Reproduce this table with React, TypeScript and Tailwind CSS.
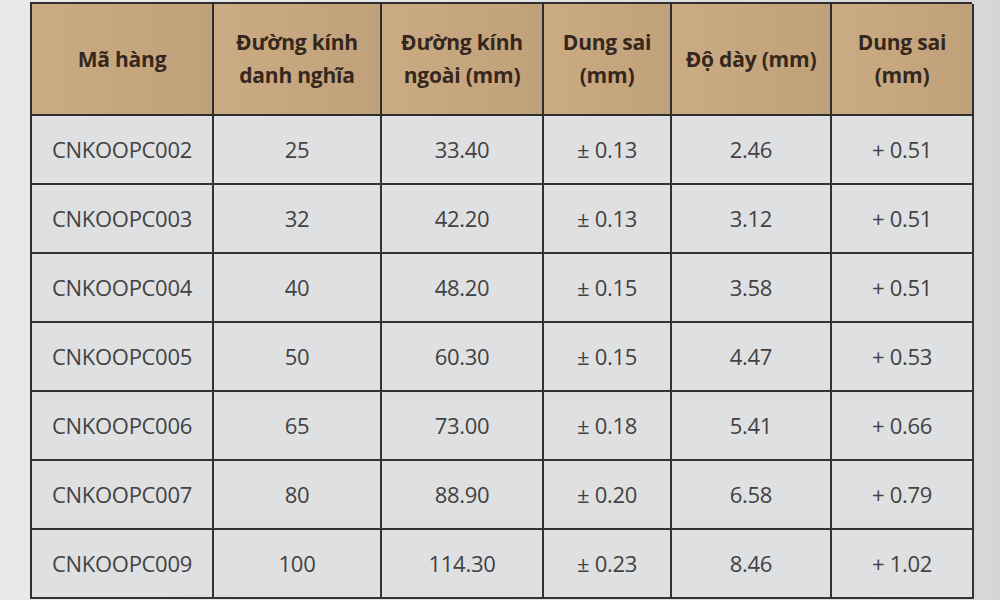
const headers = [
  ['Mã hàng'],
  ['Đường kính', 'danh nghĩa'],
  ['Đường kính', 'ngoài (mm)'],
  ['Dung sai', '(mm)'],
  ['Độ dày (mm)'],
  ['Dung sai', '(mm)'],
];

const rows = [
  ['CNKOOPC002', '25', '33.40', '± 0.13', '2.46', '+ 0.51'],
  ['CNKOOPC003', '32', '42.20', '± 0.13', '3.12', '+ 0.51'],
  ['CNKOOPC004', '40', '48.20', '± 0.15', '3.58', '+ 0.51'],
  ['CNKOOPC005', '50', '60.30', '± 0.15', '4.47', '+ 0.53'],
  ['CNKOOPC006', '65', '73.00', '± 0.18', '5.41', '+ 0.66'],
  ['CNKOOPC007', '80', '88.90', '± 0.20', '6.58', '+ 0.79'],
  ['CNKOOPC009', '100', '114.30', '± 0.23', '8.46', '+ 1.02'],
];

export default function App() {
  return (
    <div
      className="h-[600px] w-[1000px] overflow-hidden bg-gradient-to-r from-[#e9eaec] via-[#e2e3e5] to-[#d6d6d8] pl-[30px] pt-[2px]"
      style={{ fontFamily: '"Open Sans", "Noto Sans", sans-serif' }}
    >
      <div className="grid w-[942px] grid-cols-[182px_168px_162px_128px_160px_142px] border-l-2 border-t-2 border-[#2e2e2e]">
        {headers.map((h, i) => (
          <div
            key={i}
            className="flex h-[112px] flex-col items-center justify-center border-b-2 border-r-2 border-[#2e2e2e] bg-gradient-to-r from-[#caab84] to-[#c0a17a] text-center text-[21px] font-bold leading-[33px] tracking-[-0.2px] text-[#36271c]"
          >
            {h.map((line, j) => (
              <span key={j}>{line}</span>
            ))}
          </div>
        ))}
        {rows.map((r, ri) =>
          r.map((c, ci) => (
            <div
              key={`${ri}-${ci}`}
              className="flex h-[69px] items-center justify-center border-b-2 border-r-2 border-[#333] bg-[#dfe0e2] text-[22px] tracking-[-0.3px] text-[#424242]"
            >
              {c}
            </div>
          )),
        )}
      </div>
    </div>
  );
}
